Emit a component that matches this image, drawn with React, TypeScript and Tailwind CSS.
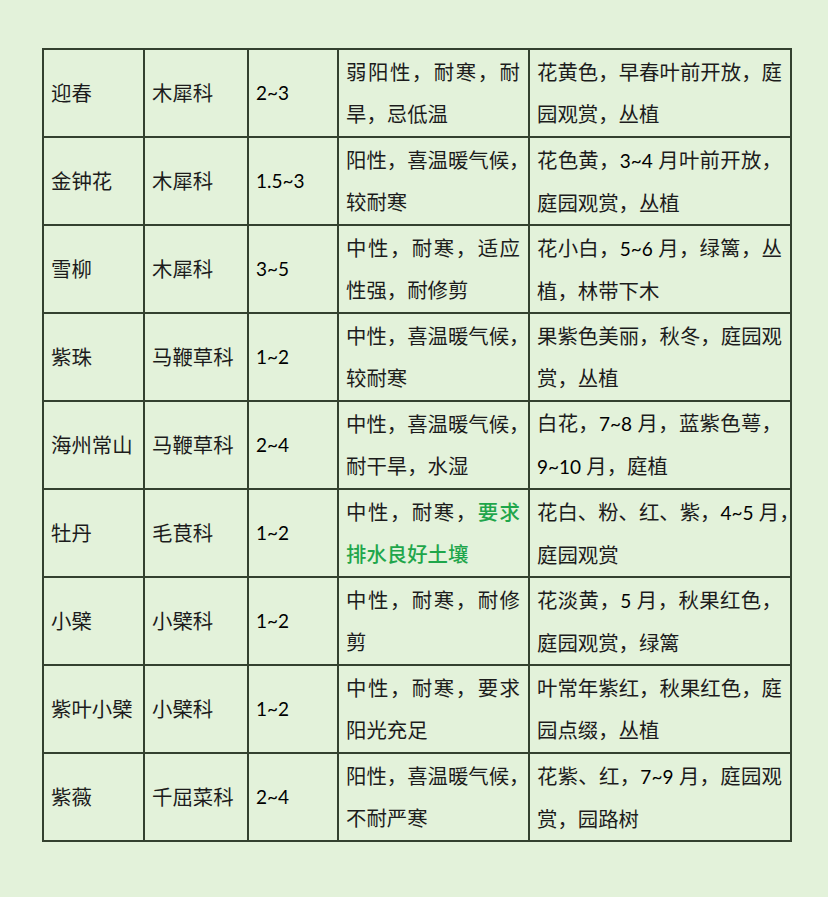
type Seg = string | { g: string };
type Line = Seg[];
type Row = { name: string; family: string; height: string; habit: Line[]; use: Line[] };

const rows: Row[] = [
  { name: "迎春", family: "木犀科", height: "2~3", habit: [["弱阳性，耐寒，耐"], ["旱，忌低温"]], use: [["花黄色，早春叶前开放，庭"], ["园观赏，丛植"]] },
  { name: "金钟花", family: "木犀科", height: "1.5~3", habit: [["阳性，喜温暖气候，"], ["较耐寒"]], use: [["花色黄，3~4 月叶前开放，"], ["庭园观赏，丛植"]] },
  { name: "雪柳", family: "木犀科", height: "3~5", habit: [["中性，耐寒，适应"], ["性强，耐修剪"]], use: [["花小白，5~6 月，绿篱，丛"], ["植，林带下木"]] },
  { name: "紫珠", family: "马鞭草科", height: "1~2", habit: [["中性，喜温暖气候，"], ["较耐寒"]], use: [["果紫色美丽，秋冬，庭园观"], ["赏，丛植"]] },
  { name: "海州常山", family: "马鞭草科", height: "2~4", habit: [["中性，喜温暖气候，"], ["耐干旱，水湿"]], use: [["白花，7~8 月，蓝紫色萼，"], ["9~10 月，庭植"]] },
  { name: "牡丹", family: "毛茛科", height: "1~2", habit: [["中性，耐寒，", { g: "要求" }], [{ g: "排水良好土壤" }]], use: [["花白、粉、红、紫，4~5 月，"], ["庭园观赏"]] },
  { name: "小檗", family: "小檗科", height: "1~2", habit: [["中性，耐寒，耐修"], ["剪"]], use: [["花淡黄，5 月，秋果红色，"], ["庭园观赏，绿篱"]] },
  { name: "紫叶小檗", family: "小檗科", height: "1~2", habit: [["中性，耐寒，要求"], ["阳光充足"]], use: [["叶常年紫红，秋果红色，庭"], ["园点缀，丛植"]] },
  { name: "紫薇", family: "千屈菜科", height: "2~4", habit: [["阳性，喜温暖气候，"], ["不耐严寒"]], use: [["花紫、红，7~9 月，庭园观"], ["赏，园路树"]] },
];

// digits are set a touch smaller, like Calibri next to SimSun
function Mixed({ text }: { text: string }) {
  const parts = text.split(/([0-9.~]+)/);
  return (
    <>
      {parts.map((p, i) =>
        /^[0-9.~]+$/.test(p) ? (
          <span key={i} className="text-[19px] text-black">{p}</span>
        ) : (
          <span key={i}>{p}</span>
        )
      )}
    </>
  );
}

function Lines({ lines }: { lines: Line[] }) {
  return (
    <>
      {lines.map((line, i) => (
        <div
          key={i}
          className={
            i < lines.length - 1
              ? "whitespace-nowrap text-justify [text-align-last:justify]"
              : "whitespace-nowrap"
          }
        >
          {line.map((s, j) =>
            typeof s === "string" ? (
              <Mixed key={j} text={s} />
            ) : (
              <span key={j} className="text-[#1fa64b] font-medium">{s.g}</span>
            )
          )}
        </div>
      ))}
    </>
  );
}

const cell = "bg-[#e3f2da] flex flex-col justify-center pl-[7px] pr-[8px]";

export default function App() {
  return (
    <div
      className="min-h-screen bg-[#e3f2da] pt-[48px] pl-[42px] text-[#1c1c1c] text-[20.4px] leading-[42px]"
      style={{ fontFamily: "Lato, 'Noto Sans CJK SC', sans-serif" }}
    >
      <div className="inline-grid grid-cols-[99px_102px_88px_189px_260px] auto-rows-[86px] gap-[2px] p-[2px] bg-[#34412f]">
        {rows.map((r) => (
          <div key={r.name} className="contents">
            <div className={cell}>{r.name}</div>
            <div className={cell}>{r.family}</div>
            <div className={cell}>
              <span className="text-[19px] text-black">{r.height}</span>
            </div>
            <div className={cell}>
              <Lines lines={r.habit} />
            </div>
            <div className={cell}>
              <Lines lines={r.use} />
            </div>
          </div>
        ))}
      </div>
    </div>
  );
}
